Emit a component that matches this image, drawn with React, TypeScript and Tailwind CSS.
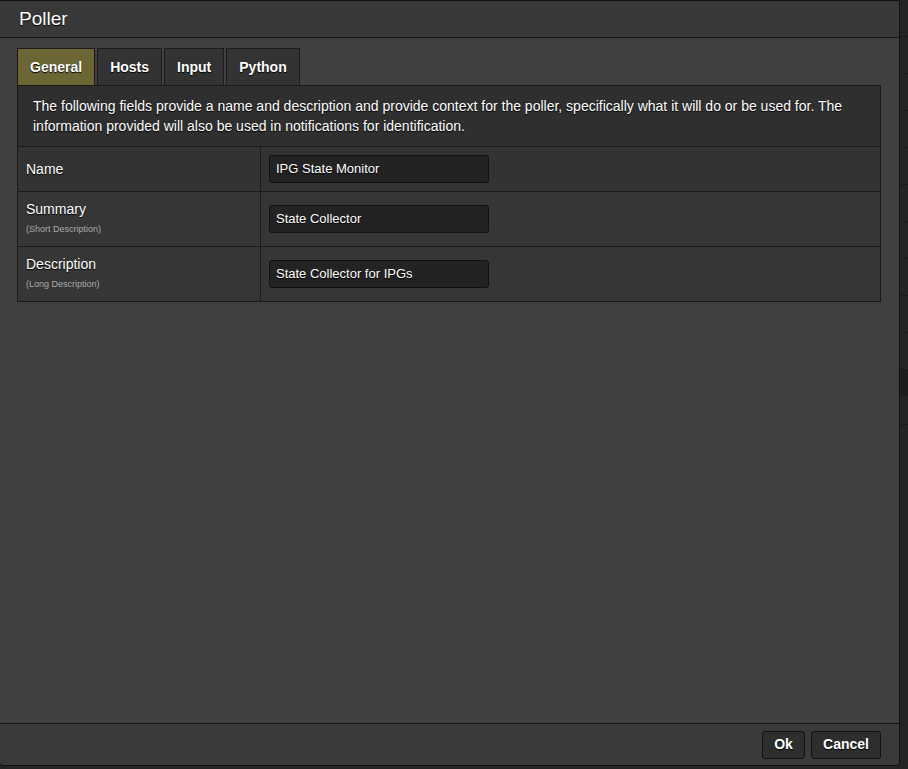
const rows = [
  { label: 'Name', sub: '', value: 'IPG State Monitor', h: 'h-[45px]' },
  { label: 'Summary', sub: '(Short Description)', value: 'State Collector', h: 'h-[55px]' },
  { label: 'Description', sub: '(Long Description)', value: 'State Collector for IPGs', h: 'h-[55px]' },
]

const tabs = ['General', 'Hosts', 'Input', 'Python']

const App = () => {
  return (
    <div
      className="w-[908px] h-[769px] bg-[#242424] flex overflow-hidden text-white"
      style={{ fontFamily: '"Liberation Sans", Arial, sans-serif' }}
    >
      {/* dialog */}
      <div className="w-[900px] h-[766px] flex flex-col border-t border-r border-b border-[#111] rounded-b-[4px] overflow-hidden shrink-0">
        <div className="h-[37px] shrink-0 bg-[#383838] border-b border-[#151515] flex items-center pl-[19px]">
          <span className="text-[19px] [text-shadow:0_1px_1px_#000]">Poller</span>
        </div>

        <div className="flex-1 bg-[#404040] pt-[10px] px-[17px]">
          <div className="flex gap-[2px]">
            {tabs.map((t, i) => (
              <div
                key={t}
                className={
                  'h-[37px] px-3 flex items-center text-[14px] font-bold border border-b-0 border-[#1c1c1c] [text-shadow:0_1px_1px_#000] ' +
                  (i === 0 ? 'bg-[#6b6634]' : 'bg-[#333333]')
                }
              >
                {t}
              </div>
            ))}
          </div>

          <div className="w-[864px] border border-[#1a1a1a]">
            <div className="bg-[#2f2f2f] px-[15px] pt-[10px] pb-[10px] text-[14px] leading-[20px] [text-shadow:0_1px_1px_#000]">
              The following fields provide a name and description and provide context for the poller, specifically what it will do or be used for. The information provided will also be used in notifications for identification.
            </div>
            {rows.map((r, i) => (
              <div key={r.label} className={'flex border-t border-[#1c1c1c] ' + r.h + (i === 0 ? ' bg-[#333333]' : ' bg-[#363636]')}>
                <div
                  className={
                    'w-[243px] border-r border-[#1c1c1c] px-[8px] flex flex-col ' +
                    (r.sub ? 'justify-start pt-[8px]' : 'justify-center')
                  }
                >
                  <div className="text-[14px] leading-[18px] [text-shadow:0_1px_1px_#000]">{r.label}</div>
                  {r.sub && <div className="text-[9px] leading-[12px] text-[#aaa] mt-[5px]">{r.sub}</div>}
                </div>
                <div className="flex-1 flex items-center px-[8px]">
                  <div className="w-[220px] h-[28px] bg-[#232323] border border-[#111] rounded-[3px] flex items-center px-[6px] text-[13px] [text-shadow:0_1px_1px_#000]">
                    {r.value}
                  </div>
                </div>
              </div>
            ))}
          </div>
        </div>

        <div className="h-[42px] shrink-0 bg-[#3a3a3a] border-t border-[#151515] flex items-center justify-end gap-[6px] pr-[18px]">
          <button className="h-[28px] w-[43px] bg-[#2e2e2e] border border-[#111] rounded-[3px] text-[14px] font-bold [text-shadow:0_1px_1px_#000]">
            Ok
          </button>
          <button className="h-[28px] w-[70px] bg-[#2e2e2e] border border-[#111] rounded-[3px] text-[14px] font-bold [text-shadow:0_1px_1px_#000]">
            Cancel
          </button>
        </div>
      </div>

      {/* page behind the dialog */}
      <div className="flex-1 flex flex-col">
        {Array.from({ length: 11 }).map((_, i) => (
          <div
            key={i}
            className={'border-b border-[#1a1a1a] ' + (i === 10 ? 'h-[26px] bg-[#1d1d1d]' : 'h-[37px]')}
          />
        ))}
        <div className="h-[29px] border-b border-[#1a1a1a]" />
      </div>
    </div>
  )
}

export default App
